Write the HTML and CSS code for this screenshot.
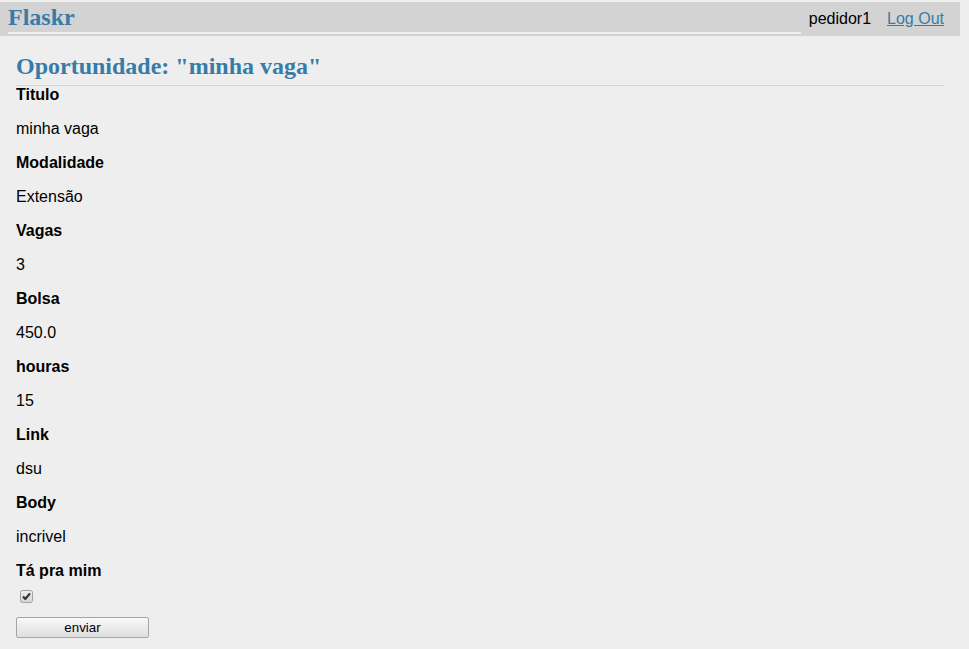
FILE: index.html
```html
<!DOCTYPE html>
<html lang="pt">
<head>
<meta charset="utf-8">
<title>Oportunidade - Flaskr</title>
<link rel="stylesheet" href="styles.css">
</head>
<body>
<nav class="topnav">
  <h1 class="brand"><a href="#">Flaskr</a></h1>
  <ul class="navlinks">
    <li><span>pedidor1</span></li>
    <li><a href="#">Log Out</a></li>
  </ul>
</nav>
<section class="content">
  <header class="page-header">
    <h1>Oportunidade: "minha vaga"</h1>
  </header>
  <div class="details">
    <div class="field-label">Titulo</div>
    <p class="field-value">minha vaga</p>
    <div class="field-label">Modalidade</div>
    <p class="field-value">Extensão</p>
    <div class="field-label">Vagas</div>
    <p class="field-value">3</p>
    <div class="field-label">Bolsa</div>
    <p class="field-value">450.0</p>
    <div class="field-label">houras</div>
    <p class="field-value">15</p>
    <div class="field-label">Link</div>
    <p class="field-value">dsu</p>
    <div class="field-label">Body</div>
    <p class="field-value">incrivel</p>
    <div class="field-label">Tá pra mim</div>
    <div class="check-row">
      <span class="check" role="checkbox" aria-checked="true">
        <svg width="13" height="13" viewBox="0 0 13 13">
          <defs>
            <linearGradient id="cg" x1="0" y1="0" x2="0" y2="1">
              <stop offset="0" stop-color="#eeeeee"/>
              <stop offset="1" stop-color="#d6d6d6"/>
            </linearGradient>
          </defs>
          <rect x="0.5" y="0.5" width="12" height="12" rx="2" fill="url(#cg)" stroke="#a0a0a0"/>
          <path d="M3 6.6 L5.3 9 L10 3.4" fill="none" stroke="#333333" stroke-width="2.2" stroke-linejoin="round"/>
        </svg>
      </span>
    </div>
    <button class="submit" type="button">enviar</button>
  </div>
</section>
</body>
</html>
```

FILE: styles.css
```css
html {
  background: #eeeeee;
}
body {
  margin: 0;
  padding-top: 2px;
  font-family: "Liberation Sans", Arial, sans-serif;
  font-size: 16px;
  color: #000;
}
a {
  color: #377ba8;
}
.topnav {
  width: 960px;
  box-sizing: border-box;
  height: 34px;
  background: #d3d3d3;
  display: flex;
  align-items: flex-start;
  padding: 0 8px;
}
.brand {
  flex: auto;
  margin: 0;
  height: 30px;
  line-height: 30px;
  border-bottom: 2px solid #f0f0f0;
  font-family: "Liberation Serif", "Times New Roman", serif;
  font-size: 24px;
  font-weight: bold;
}
.brand a {
  color: #377ba8;
  text-decoration: none;
}
.navlinks {
  display: flex;
  list-style: none;
  margin: 0;
  padding: 0;
  height: 34px;
  align-items: center;
}
.navlinks span,
.navlinks a {
  display: block;
  padding: 0 8px;
  line-height: 18px;
}
.content {
  padding: 0 25px 16px 16px;
}
.page-header {
  padding-top: 16px;
  border-bottom: 1px solid #d3d3d3;
  width: 928px;
}
.page-header h1 {
  margin: 0 0 5px 0;
  line-height: 28px;
  font-family: "Liberation Serif", "Times New Roman", serif;
  font-size: 24px;
  font-weight: bold;
  color: #377ba8;
}
.field-label {
  font-weight: bold;
  line-height: 18px;
}
.field-value {
  margin: 16px 0;
  line-height: 18px;
}
.check-row {
  height: 13px;
  padding: 10px 0 0 4px;
}
.check {
  display: block;
  width: 13px;
  height: 13px;
}
.check svg {
  display: block;
}
.submit {
  display: block;
  margin-top: 14px;
  width: 133px;
  height: 21px;
  padding: 0;
  border: 1px solid #a6a6a6;
  border-radius: 2px;
  background: linear-gradient(#f9f9f9, #dedede);
  font-family: "Liberation Sans", Arial, sans-serif;
  font-size: 13.33px;
  color: #000;
}
```
